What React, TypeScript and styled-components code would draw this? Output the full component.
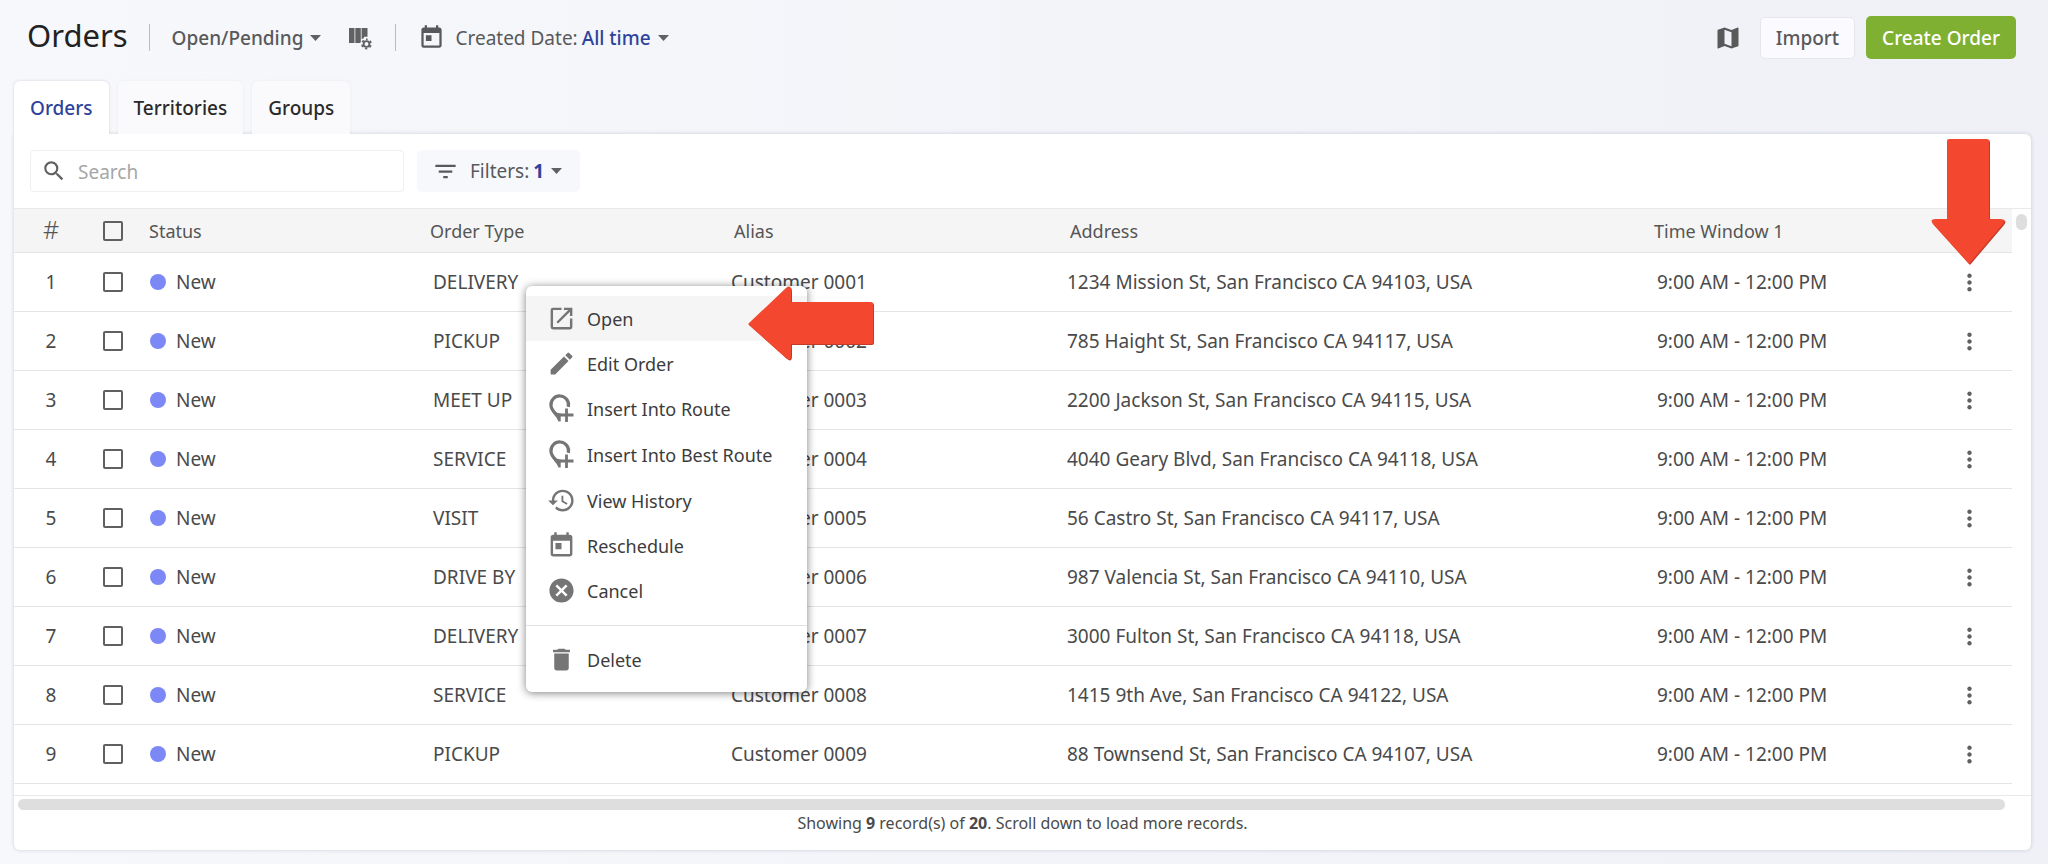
import React from "react";
import styled, { createGlobalStyle } from "styled-components";
import {
  MdCancel, MdDelete, MdEdit, MdFilterList, MdHistory, MdMap,
  MdMoreVert, MdOpenInNew, MdSearch, MdToday,
} from "react-icons/md";

const Global = createGlobalStyle`
  *, *::before, *::after { box-sizing: border-box; }
  body {
    margin: 0;
    background: linear-gradient(90deg, #f7f8fb, #eff1f7);
    color: #4a4a4a;
    font-family: "Noto Sans", "Open Sans", sans-serif;
    font-size: 19px;
    line-height: 26px;
  }
  button, input { font: inherit; color: inherit; margin: 0; }
  button { border: 0; padding: 0; background: none; cursor: pointer; }
`;

const Page = styled.div`
  display: flex;
  flex-direction: column;
  min-height: 100vh;
  padding: 0 17px 14px 14px;
`;

const TopBar = styled.header`
  display: flex;
  align-items: center;
  height: 75px;
  padding: 0 15px 0 13px;
`;

const Title = styled.h1`
  margin: 0 21px 6px 0;
  color: #222;
  font-size: 31px;
  font-weight: 400;
  line-height: 44px;
`;

const Separator = styled.span`
  width: 1px;
  height: 27px;
  background: #b9bbbf;
`;

const BarButton = styled.button<{ $strong?: boolean }>`
  display: flex;
  align-items: center;
  white-space: nowrap;
  color: #58595b;
  font-weight: ${(p) => (p.$strong ? 500 : 400)};
  svg { flex: none; }
`;

const Accent = styled.strong<{ $bold?: boolean }>`
  margin-left: 4px;
  color: #2f439c;
  font-weight: ${(p) => (p.$bold ? 700 : 500)};
`;

const ViewPicker = styled(BarButton)` margin-left: 22px; `;
const ColumnsButton = styled(BarButton)` margin: 0 23px 0 27px; `;
const DatePicker = styled(BarButton)` margin-left: 22px; gap: 10px; `;

const Caption = styled.span`
  display: flex;
  align-items: center;
  svg { margin-left: 7px; }
`;

const Actions = styled.div`
  display: flex;
  align-items: center;
  margin-left: auto;
`;

const ImportButton = styled(BarButton)`
  height: 42px;
  margin: 0 11px 0 18px;
  padding: 0 15px;
  border: 1px solid #e6e7ec;
  border-radius: 5px;
  background: #fafaff;
`;

const CreateButton = styled(BarButton)`
  height: 43px;
  padding: 0 16px;
  border-radius: 5px;
  background: #7fb032;
  color: #fff;
`;

const Tabs = styled.nav`
  display: flex;
  gap: 9px;
  padding-top: 6px;
`;

const Tab = styled.button<{ $active?: boolean }>`
  height: 53px;
  padding: 0 16px;
  border-radius: 6px 6px 0 0;
  background: ${(p) => (p.$active ? "#fff" : "#fafafd")};
  box-shadow: 0 0 3px rgba(40, 50, 90, ${(p) => (p.$active ? 0.18 : 0.06)});
  clip-path: inset(-4px -4px 0 -4px);
  color: ${(p) => (p.$active ? "#2f439c" : "#2a2a2a")};
  font-weight: 500;
`;

const Card = styled.main`
  display: flex;
  flex: 1;
  flex-direction: column;
  border-radius: 0 6px 6px 6px;
  background: #fff;
  box-shadow: 0 0 4px rgba(40, 50, 90, 0.2);
`;

const Toolbar = styled.div`
  display: flex;
  gap: 13px;
  padding: 16px;
`;

const SearchField = styled.label`
  display: flex;
  align-items: center;
  gap: 11px;
  width: 374px;
  height: 42px;
  padding: 0 10px;
  border: 1px solid #efeff1;
  border-radius: 4px;
  color: #606163;
  svg { flex: none; }
`;

const SearchInput = styled.input`
  flex: 1;
  min-width: 0;
  padding: 1px 0 0;
  border: 0;
  outline: 0;
  background: none;
  &::placeholder { color: #a6a6a6; opacity: 1; }
`;

const FilterButton = styled(BarButton)`
  gap: 11px;
  height: 42px;
  padding: 0 18px 0 15px;
  border-radius: 5px;
  background: #f6f8fc;
`;

const TableArea = styled.div`
  position: relative;
  display: flex;
  border-top: 1px solid #e9e9e9;
`;

const Table = styled.table`
  flex: 1;
  table-layout: fixed;
  border-collapse: separate;
  border-spacing: 0;
`;

const Col = styled.col<{ $w?: number }>`
  width: ${(p) => (p.$w ? `${p.$w}px` : "auto")};
`;

const HeadCell = styled.th<{ $center?: boolean; $inset?: number }>`
  height: 44px;
  padding: 0 0 0 ${(p) => p.$inset ?? 0}px;
  border-bottom: 1px solid #e4e4e4;
  background: #f5f5f5;
  color: #555;
  font-size: 18px;
  font-weight: 400;
  text-align: ${(p) => (p.$center ? "center" : "left")};
  white-space: nowrap;
`;

const NumberSign = styled.span`
  font-size: 25px;
  font-weight: 300;
`;

const Cell = styled.td<{ $center?: boolean; $inset?: number }>`
  height: 59px;
  padding: 0 0 0 ${(p) => p.$inset ?? 0}px;
  border-bottom: 1px solid #e4e4e4;
  text-align: ${(p) => (p.$center ? "center" : "left")};
  white-space: nowrap;
`;

const CheckBox = styled.input`
  display: block;
  width: 20px;
  height: 20px;
  margin: 0 15px;
  border: 2px solid #606060;
  border-radius: 2px;
  appearance: none;
  &:checked { background: #606060; }
`;

const Status = styled.span`
  display: flex;
  align-items: center;
  gap: 10px;
  &::before {
    width: 16px;
    height: 16px;
    border-radius: 50%;
    background: #7c88f5;
    content: "";
  }
`;

const RowMenuButton = styled.button`
  display: block;
  height: 27px;
  margin: 0 auto;
  color: #606060;
  svg { display: block; }
`;

const ScrollGutter = styled.div`
  width: 19px;
  padding: 5px 4px;
`;

const VerticalThumb = styled.div`
  width: 11px;
  height: 16px;
  border-radius: 6px;
  background: #dedede;
`;

const ScrollTrack = styled.div`
  margin-top: 11px;
  padding: 3px 26px 3px 4px;
  border-top: 1px solid #e9e9e9;
`;

const HorizontalThumb = styled.div`
  height: 11px;
  border-radius: 6px;
  background: #dedede;
`;

const Footer = styled.footer`
  font-size: 16px;
  line-height: 20px;
  text-align: center;
`;

const Menu = styled.div`
  position: absolute;
  top: 77px;
  left: 512px;
  width: 281px;
  padding: 10px 0;
  border-radius: 6px;
  background: #fff;
  box-shadow: 0 1px 8px rgba(0, 0, 0, 0.5);
`;

const MenuItem = styled.button<{ $active?: boolean }>`
  display: flex;
  align-items: center;
  gap: 11px;
  width: 100%;
  padding: 8px 21px;
  background: ${(p) => (p.$active ? "#f5f5f5" : "transparent")};
  color: #3c3c3c;
  font-size: 18px;
  white-space: nowrap;
  svg { flex: none; color: #757575; }
`;

const MenuDivider = styled.hr`
  height: 1px;
  margin: 12px 0 11px;
  border: 0;
  background: #e2e2e2;
`;

const PointerArrow = styled.svg<{ $top: number; $left?: number; $right?: number }>`
  position: absolute;
  top: ${(p) => p.$top}px;
  ${(p) => (p.$left === undefined ? `right: ${p.$right}px;` : `left: ${p.$left}px;`)}
  pointer-events: none;
  filter: drop-shadow(1px 1px 0 #c23a28);
`;

const Caret = () => (
  <svg width="11" height="6" viewBox="0 0 11 6" aria-hidden="true">
    <path d="M0 0h11L5.500 6z" fill="#606163" />
  </svg>
);

const ColumnsIcon = () => (
  <svg width="24" height="24" viewBox="0 0 24 24" fill="#606163" aria-hidden="true">
    <path d="M1 2h5.500v15H1zM7.300 2h5.500v14l-.8 1H7.300zM13.600 2h5.900v8.700h-3.300l-.8 1.800-1.800.4z" />
    <circle cx="18.500" cy="18" r="2.900" fill="none" stroke="#606163" strokeWidth="1.900" />
    <circle cx="18.500" cy="18" r="4.600" fill="none" stroke="#606163" strokeWidth="1.600" strokeDasharray="2.400 2.417" strokeDashoffset="1.200" transform="rotate(-90 18.500 18)" />
  </svg>
);

const InsertIcon = () => (
  <svg width="29" height="30" viewBox="0 0 29 30" fill="none" stroke="#757575" aria-hidden="true">
    <path d="M21.300 12.800A8.800 8.800 0 1 0 4 11.800c.3 3.500 3 6 5.800 9.700" strokeWidth="3.200" />
    <path d="M3.500 14.500c2 4.500 6 8 8 13h2.200v-8l-3.500-.8z" fill="#757575" stroke="none" />
    <path d="M19.500 14.500V28M13 21h13.500" strokeWidth="2.800" />
  </svg>
);

const columns = [
  { label: "Status", width: 281, cellInset: 1 },
  { label: "Order Type", width: 301, cellInset: 3 },
  { label: "Alias", width: 336, headInset: 3 },
  { label: "Address", headInset: 3 },
  { label: "Time Window 1", width: 272, cellInset: 3 },
];

const orders = [
  ["DELIVERY", "1234 Mission St, San Francisco CA 94103, USA"],
  ["PICKUP", "785 Haight St, San Francisco CA 94117, USA"],
  ["MEET UP", "2200 Jackson St, San Francisco CA 94115, USA"],
  ["SERVICE", "4040 Geary Blvd, San Francisco CA 94118, USA"],
  ["VISIT", "56 Castro St, San Francisco CA 94117, USA"],
  ["DRIVE BY", "987 Valencia St, San Francisco CA 94110, USA"],
  ["DELIVERY", "3000 Fulton St, San Francisco CA 94118, USA"],
  ["SERVICE", "1415 9th Ave, San Francisco CA 94122, USA"],
  ["PICKUP", "88 Townsend St, San Francisco CA 94107, USA"],
];

const menuItems = [
  { label: "Open", icon: <MdOpenInNew size={29} /> },
  { label: "Edit Order", icon: <MdEdit size={29} /> },
  { label: "Insert Into Route", icon: <InsertIcon /> },
  { label: "Insert Into Best Route", icon: <InsertIcon /> },
  { label: "View History", icon: <MdHistory size={29} /> },
  { label: "Reschedule", icon: <MdToday size={29} /> },
  { label: "Cancel", icon: <MdCancel size={29} /> },
];

export default function App() {
  return (
    <Page>
      <Global />
      <TopBar>
        <Title>Orders</Title>
        <Separator />
        <ViewPicker $strong><Caption>Open/Pending <Caret /></Caption></ViewPicker>
        <ColumnsButton aria-label="Configure columns"><ColumnsIcon /></ColumnsButton>
        <Separator />
        <DatePicker>
          <MdToday size={27} />
          <Caption>Created Date: <Accent>All time</Accent> <Caret /></Caption>
        </DatePicker>
        <Actions>
          <BarButton aria-label="Map"><MdMap size={28} /></BarButton>
          <ImportButton $strong>Import</ImportButton>
          <CreateButton $strong>Create Order</CreateButton>
        </Actions>
      </TopBar>
      <Tabs>
        <Tab $active>Orders</Tab>
        <Tab>Territories</Tab>
        <Tab>Groups</Tab>
      </Tabs>
      <Card>
        <Toolbar>
          <SearchField>
            <MdSearch size={26} />
            <SearchInput type="text" placeholder="Search" aria-label="Search" />
          </SearchField>
          <FilterButton>
            <MdFilterList size={27} />
            <Caption>Filters: <Accent $bold>1</Accent> <Caret /></Caption>
          </FilterButton>
        </Toolbar>
        <TableArea>
          <Table>
            <colgroup>
              <Col $w={74} />
              <Col $w={61} />
              {columns.map((c) => <Col key={c.label} $w={c.width} />)}
              <Col $w={86} />
            </colgroup>
            <thead>
              <tr>
                <HeadCell $center><NumberSign>#</NumberSign></HeadCell>
                <HeadCell><CheckBox type="checkbox" aria-label="Select all orders" /></HeadCell>
                {columns.map((c) => <HeadCell key={c.label} $inset={c.headInset}>{c.label}</HeadCell>)}
                <HeadCell aria-label="Actions" />
              </tr>
            </thead>
            <tbody>
              {orders.map(([type, address], i) => {
                const values = [
                  <Status>New</Status>,
                  type,
                  `Customer 000${i + 1}`,
                  address,
                  "9:00 AM - 12:00 PM",
                ];
                return (
                  <tr key={address}>
                    <Cell $center>{i + 1}</Cell>
                    <Cell><CheckBox type="checkbox" aria-label={`Select order ${i + 1}`} /></Cell>
                    {columns.map((c, n) => <Cell key={c.label} $inset={c.cellInset}>{values[n]}</Cell>)}
                    <Cell><RowMenuButton aria-label={`Actions for order ${i + 1}`}><MdMoreVert size={27} /></RowMenuButton></Cell>
                  </tr>
                );
              })}
            </tbody>
          </Table>
          <ScrollGutter><VerticalThumb /></ScrollGutter>
          <Menu role="menu">
            {menuItems.map((m, i) => (
              <MenuItem key={m.label} role="menuitem" $active={i === 0}>{m.icon}{m.label}</MenuItem>
            ))}
            <MenuDivider />
            <MenuItem role="menuitem"><MdDelete size={29} />Delete</MenuItem>
          </Menu>
          <PointerArrow $top={77} $left={733} width="128" height="76" viewBox="0 0 128 76" aria-hidden="true">
            <path d="M1 38 39 2q5-4 5 3v11h80q2 0 2 2v38q0 2-2 2H44v11q0 7-5 3z" fill="#f4472f" />
          </PointerArrow>
          <PointerArrow $top={-71} $right={24} width="76" height="127" viewBox="0 0 76 127" aria-hidden="true">
            <path d="M38 126 2 86q-4-5 3-5h11V3q0-2 2-2h38q2 0 2 2v78h11q7 0 3 5z" fill="#f4472f" />
          </PointerArrow>
        </TableArea>
        <ScrollTrack><HorizontalThumb /></ScrollTrack>
        <Footer>Showing <b>9</b> record(s) of <b>20</b>. Scroll down to load more records.</Footer>
      </Card>
    </Page>
  );
}
